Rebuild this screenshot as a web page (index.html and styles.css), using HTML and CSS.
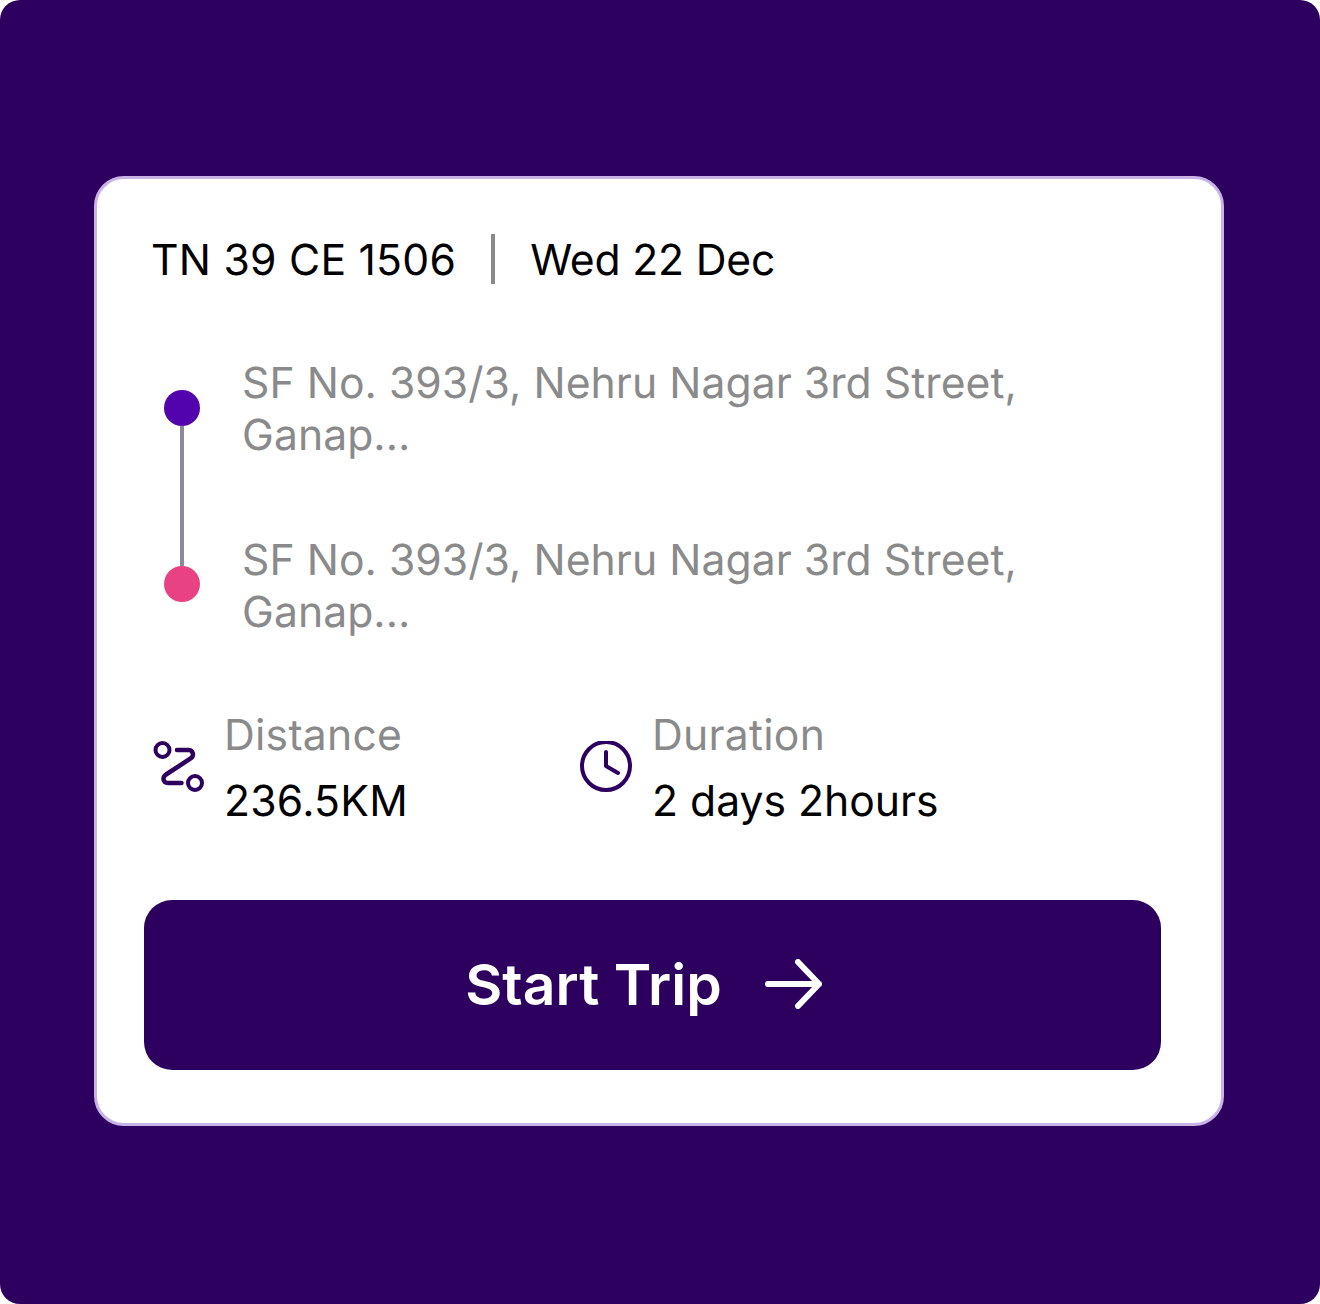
FILE: index.html
```html
<!DOCTYPE html>
<html>
<head>
	<meta charset="utf-8">
	<title>Trip</title>
	<link rel="stylesheet" href="styles.css">
</head>
<body>
	<div class="frame">
		<div class="card">
			<div class="head">
				<span class="plate">TN 39 CE 1506</span>
				<span class="divider"></span>
				<span class="date">Wed 22 Dec</span>
			</div>

			<div class="route">
				<div class="timeline">
					<span class="dot dot-start"></span>
					<span class="line"></span>
					<span class="dot dot-end"></span>
				</div>
				<div class="places">
					<p class="place">SF No. 393/3, Nehru Nagar 3rd Street, Ganap...</p>
					<p class="place">SF No. 393/3, Nehru Nagar 3rd Street, Ganap...</p>
				</div>
			</div>

			<div class="stats">
				<div class="stat stat-distance">
					<svg class="icon-route" width="56" height="56" viewBox="0 0 56 56" fill="none" stroke="#2d0060" stroke-width="4" stroke-linecap="round" stroke-linejoin="round">
						<circle cx="11.500" cy="9" r="7"/>
						<circle cx="44" cy="42" r="7"/>
						<path stroke-width="4.500" d="M26 9h11.500c4.500 0 6 5.500 2.500 8.200L15 33.500c-4 3-3 8.500 2 8.500h13.500"/>
					</svg>
					<div class="stat-text">
						<div class="stat-label">Distance</div>
						<div class="stat-value stat-km">236.5KM</div>
					</div>
				</div>
				<div class="stat stat-duration">
					<svg class="icon-clock" width="56" height="56" viewBox="0 0 56 56" fill="none" stroke="#2d0060" stroke-width="4" stroke-linecap="round" stroke-linejoin="round">
						<circle cx="27" cy="25" r="24"/>
						<path d="M27 11v14l12 7"/>
					</svg>
					<div class="stat-text">
						<div class="stat-label">Duration</div>
						<div class="stat-value">2 days 2hours</div>
					</div>
				</div>
			</div>

			<button class="start">
				<span>Start Trip</span>
				<svg width="59" height="50" viewBox="0 0 59 50" fill="none" stroke="#fff" stroke-width="6" stroke-linecap="round" stroke-linejoin="round">
					<path d="M3 25h51M33 3l21 22-21 22"/>
				</svg>
			</button>
		</div>
	</div>
</body>
</html>
```

FILE: styles.css
```css
* {
  box-sizing: border-box;
}

body {
  margin: 0;
  background-color: #fff;
  font-family: "Inter", "Liberation Sans", sans-serif;
  font-size: 42.67px;
  text-rendering: geometricPrecision;
  color: #000;
}

.frame {
  width: 1320px;
  height: 1304px;
  padding: 176px 96px 178px 94px;
  background-color: #2d0060;
  border-radius: 20px;
}

.card {
  height: 950px;
  padding: 50px 60px 0 47px;
  background-color: #fff;
  border: 3px solid #c9b3e6;
  border-radius: 30px;
}

.head {
  display: flex;
  align-items: center;
  gap: 35px;
  height: 62px;
  padding-left: 7px;
}

.plate {
  letter-spacing: 0.25px;
}

.date {
  letter-spacing: -0.2px;
}

.divider {
  width: 4px;
  height: 50px;
  margin-top: -2px;
  background-color: #8a8a8a;
}

.route {
  display: flex;
  margin-top: 67px;
  padding-left: 20px;
}

.timeline {
  display: flex;
  flex-direction: column;
  align-items: center;
  width: 36px;
  padding: 32px 0 37px;
}

.dot {
  flex: none;
  width: 36px;
  height: 36px;
  border-radius: 50%;
}

.dot-start {
  background-color: #5203ad;
}

.dot-end {
  background-color: #e84283;
}

.line {
  flex: 1;
  width: 4px;
  background-color: #8a8a9a;
}

.places {
  width: 800px;
  margin-left: 42px;
}

.place {
  margin: 0 0 73px;
  line-height: 52px;
  letter-spacing: 0.05px;
  color: #8a8a8a;
}

.place:last-child {
  margin-bottom: 0;
}

.stats {
  display: flex;
  margin-top: 67px;
  padding-left: 7px;
}

.stat {
  display: flex;
  align-items: center;
}

.stat-distance {
  width: 428px;
}

.stat-text {
  margin-left: 17px;
}

.stat-label {
  height: 66px;
  line-height: 60px;
  letter-spacing: 0.25px;
  color: #8a8a8a;
}

.stat-value {
  line-height: 60px;
}

.stat-km {
  letter-spacing: 0.25px;
}

.start {
  display: flex;
  align-items: center;
  justify-content: center;
  gap: 43px;
  width: 1017px;
  height: 170px;
  margin-top: 68px;
  padding: 0 16px 2px 0;
  border: 0;
  border-radius: 28px;
  background-color: #2d0060;
  color: #fff;
  font-family: inherit;
  font-size: 57px;
  font-weight: 600;
}
```
